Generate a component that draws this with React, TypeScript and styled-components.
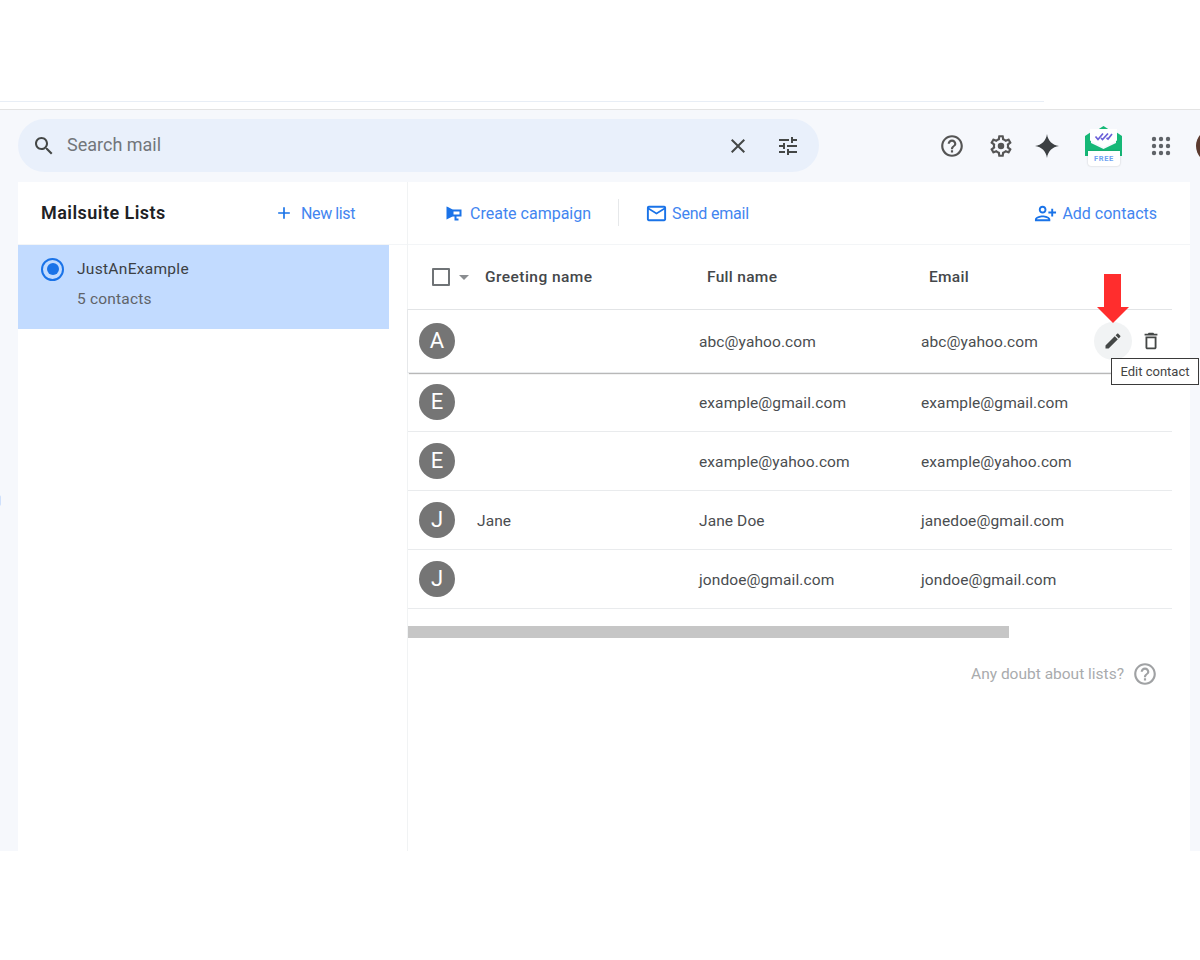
import React from "react";
import styled, { createGlobalStyle } from "styled-components";

const Global = createGlobalStyle`
  html, body { margin: 0; padding: 0; background: #fff; }
  body { font-family: Roboto, "Liberation Sans", sans-serif; color: #444; overflow: hidden; }
  * { box-sizing: border-box; }
`;

const Page = styled.div`
  width: 1200px;
  height: 960px;
  display: flex;
  flex-direction: column;
  background: #fff;
  overflow: hidden;
`;
const TopStrip = styled.div`
  height: 110px;
  padding-top: 101px;
  border-bottom: 1px solid #e3e3e3;
`;
const TopLine = styled.div`
  width: 1044px;
  height: 1px;
  background: #e8eef6;
`;
const App = styled.div`
  position: relative;
  height: 741px;
  background: #f6f8fc;
  display: flex;
  flex-direction: column;
`;
const EdgeMark = styled.div`
  position: absolute;
  left: -3px;
  top: 385px;
  width: 4px;
  height: 11px;
  border-radius: 3px;
  background: #cfe0fb;
`;
const Header = styled.header`
  height: 72px;
  flex: none;
  padding: 9px 0 10px 18px;
  display: flex;
  align-items: center;
  overflow: hidden;
`;
const SearchBar = styled.div`
  width: 801px;
  height: 53px;
  flex: none;
  border-radius: 27px;
  background: #e9f0fb;
  display: flex;
  align-items: center;
  padding: 0 19px 0 14px;
  color: #444746;
`;
const SearchText = styled.span`
  flex: 1;
  margin-left: 11px;
  padding-bottom: 2px;
  font-size: 18px;
  color: #72767a;
`;
const Glyph = styled.svg<{ $size?: number; $left?: number; $color?: string }>`
  width: ${(p) => p.$size ?? 24}px;
  height: ${(p) => p.$size ?? 24}px;
  margin-left: ${(p) => p.$left ?? 0}px;
  flex: none;
  display: block;
  fill: ${(p) => p.$color ?? "#444746"};
`;
const HornGlyph = styled.svg`
  width: 16px;
  height: 15px;
  flex: none;
  display: block;
  fill: none;
  stroke: #1a73e8;
  stroke-width: 2;
`;
const LogoWrap = styled.div`
  position: relative;
  width: 37px;
  height: 40px;
  margin-left: 26px;
  flex: none;
`;
const LogoBadge = styled.div`
  position: absolute;
  left: 3px;
  bottom: 0;
  width: 32px;
  height: 15px;
  background: #fff;
  border-radius: 0 0 3px 3px;
  box-shadow: 0 0 2px rgba(0, 0, 0, 0.22);
  color: #6ea2f2;
  font-size: 7.5px;
  font-weight: 700;
  letter-spacing: 0.6px;
  line-height: 15px;
  text-align: center;
`;
const Profile = styled.div`
  width: 34px;
  height: 34px;
  margin-left: 23px;
  flex: none;
  border-radius: 50%;
  background: #5b3a2e;
`;
const Body = styled.main`
  flex: 1;
  margin: 0 10px 0 18px;
  background: #fff;
  display: flex;
  min-height: 0;
`;
const Side = styled.aside`
  width: 390px;
  flex: none;
  border-right: 1px solid #f1f3f4;
  display: flex;
  flex-direction: column;
`;
const SideHead = styled.div`
  height: 63px;
  flex: none;
  display: flex;
  align-items: center;
  padding: 0 52px 1px 23px;
  border-bottom: 1px solid #f3f5f7;
`;
const SideTitle = styled.h2`
  flex: 1;
  margin: 0;
  font-size: 18px;
  font-weight: 600;
  color: #202124;
  letter-spacing: 0.45px;
`;
const LinkAction = styled.span<{ $gap?: number; $tight?: number }>`
  display: flex;
  align-items: center;
  padding-top: 1px;
  gap: ${(p) => p.$gap ?? 8}px;
  font-size: 16px;
  letter-spacing: ${(p) => p.$tight ?? 0}px;
  color: #4285f0;
  white-space: nowrap;
`;
const ListItem = styled.div`
  width: 371px;
  height: 84px;
  background: #c2dbff;
  padding: 13px 0 0 23px;
  display: grid;
  grid-template-columns: 36px 1fr;
  grid-template-rows: 22px 38px;
  align-items: center;
`;
const Radio = styled.span`
  width: 23px;
  height: 23px;
  border-radius: 50%;
  border: 2.5px solid #1a73e8;
  display: flex;
  align-items: center;
  justify-content: center;
  &::after {
    content: "";
    width: 12px;
    height: 12px;
    border-radius: 50%;
    background: #1a73e8;
  }
`;
const ListName = styled.span`
  font-size: 15.5px;
  color: #3c4043;
  letter-spacing: 0.3px;
`;
const ListCount = styled.span`
  grid-column: 2;
  font-size: 15.5px;
  color: #5f6368;
  letter-spacing: 0.2px;
`;
const Content = styled.section`
  flex: 1;
  min-width: 0;
  display: flex;
  flex-direction: column;
`;
const Toolbar = styled.div`
  height: 63px;
  flex: none;
  display: flex;
  align-items: center;
  padding: 0 33px 1px 38px;
  border-bottom: 1px solid #f3f5f7;
`;
const ToolDivider = styled.span`
  width: 1px;
  height: 27px;
  margin: 0 26px 0 27px;
  background: #e6e8ea;
`;
const Spacer = styled.span`
  flex: 1;
`;
const Table = styled.div`
  width: 764px;
  position: relative;
`;
const HeadRow = styled.div`
  height: 64px;
  display: grid;
  grid-template-columns: 77px 222px 222px 1fr;
  align-items: center;
  font-size: 15.5px;
  font-weight: 500;
  color: #44474a;
  letter-spacing: 0.3px;
`;
const GreetingHead = styled.span`
  letter-spacing: 0.45px;
`;
const SelectCell = styled.div`
  display: flex;
  align-items: center;
  padding-left: 24px;
`;
const CheckBox = styled.span`
  width: 18px;
  height: 18px;
  border: 2px solid #6f7376;
  border-radius: 1px;
  flex: none;
`;
const Caret = styled.span`
  margin-left: 9px;
  width: 0;
  height: 0;
  border-left: 5px solid transparent;
  border-right: 5px solid transparent;
  border-top: 5px solid #8a8d90;
`;
const Row = styled.div<{ $active?: boolean }>`
  position: relative;
  height: ${(p) => (p.$active ? 64 : 59)}px;
  display: grid;
  grid-template-columns: 69px 222px 222px 1fr;
  align-items: center;
  font-size: 15.5px;
  color: #4a4d50;
  letter-spacing: 0.1px;
  border-bottom: 1px solid #e9ebed;
  border-top: ${(p) => (p.$active ? "1px solid #e2e4e6" : "none")};
  box-shadow: ${(p) =>
    p.$active ? "0 2px 1px -1px rgba(0,0,0,.28), -1px 0 0 #e6e8ea" : "none"};
  z-index: ${(p) => (p.$active ? 1 : 0)};
  background: #fff;
`;
const Cell = styled.span`
  padding-top: 1px;
  min-height: 1px;
`;
const AvatarCell = styled.div`
  padding-left: 11px;
`;
const Avatar = styled.div`
  width: 36px;
  height: 36px;
  border-radius: 50%;
  background: #757575;
  color: #fff;
  font-size: 22px;
  line-height: 36px;
  text-align: center;
`;
const RowActions = styled.div`
  position: absolute;
  right: 2px;
  top: 12px;
  display: flex;
  align-items: center;
`;
const HoverIcon = styled.span`
  width: 38px;
  height: 38px;
  border-radius: 50%;
  background: #f1f3f4;
  display: flex;
  align-items: center;
  justify-content: center;
`;
const PlainIcon = styled.span`
  width: 38px;
  height: 38px;
  display: flex;
  align-items: center;
  justify-content: center;
`;
const Tooltip = styled.div`
  position: absolute;
  left: 703px;
  top: 113px;
  width: 88px;
  height: 27px;
  background: #fff;
  border: 1px solid #3a3a3a;
  font-size: 13px;
  line-height: 26px;
  text-align: center;
  color: #444;
  white-space: nowrap;
  z-index: 3;
`;
const Annotation = styled.svg`
  position: absolute;
  left: 689px;
  top: 29px;
  width: 32px;
  height: 49px;
  z-index: 3;
`;
const ScrollThumb = styled.div`
  width: 601px;
  height: 12px;
  margin-top: 17px;
  background: #c6c6c6;
`;
const HelpRow = styled.div`
  margin-top: 23px;
  width: 750px;
  display: flex;
  align-items: center;
  justify-content: flex-end;
  gap: 8px;
  font-size: 15.5px;
  color: #a9abad;
`;

const P = {
  search:
    "M15.5 14h-.79l-.28-.27C15.41 12.59 16 11.11 16 9.5 16 5.91 13.09 3 9.5 3S3 5.91 3 9.5 5.91 16 9.5 16c1.61 0 3.09-.59 4.23-1.57l.27.28v.79l5 4.99L20.49 19l-4.99-5zm-6 0C7.01 14 5 11.99 5 9.5S7.01 5 9.5 5 14 7.01 14 9.5 11.99 14 9.5 14z",
  close:
    "M19 6.41L17.59 5 12 10.59 6.41 5 5 6.41 10.59 12 5 17.59 6.41 19 12 13.41 17.59 19 19 17.59 13.41 12z",
  tune: "M3 17v2h6v-2H3zM3 5v2h10V5H3zm10 16v-2h8v-2h-8v-2h-2v6h2zM7 9v2H3v2h4v2h2V9H7zm14 4v-2H11v2h10zm-6-4h2V7h4V5h-4V3h-2v6z",
  help: "M11 18h2v-2h-2v2zm1-16C6.48 2 2 6.48 2 12s4.48 10 10 10 10-4.48 10-10S17.52 2 12 2zm0 18c-4.41 0-8-3.59-8-8s3.59-8 8-8 8 3.59 8 8-3.59 8-8 8zm0-14c-2.21 0-4 1.79-4 4h2c0-1.1.9-2 2-2s2 .9 2 2c0 2-3 1.75-3 5h2c0-2.25 3-2.5 3-5 0-2.21-1.79-4-4-4z",
  gear: "M19.43 12.98c.04-.32.07-.64.07-.98 0-.34-.03-.66-.07-.98l2.11-1.65c.19-.15.24-.42.12-.64l-2-3.46c-.09-.16-.26-.25-.44-.25-.06 0-.12.01-.17.03l-2.49 1c-.52-.4-1.08-.73-1.69-.98l-.38-2.65C14.46 2.18 14.25 2 14 2h-4c-.25 0-.46.18-.49.42l-.38 2.65c-.61.25-1.17.59-1.69.98l-2.49-1c-.06-.02-.12-.03-.18-.03-.17 0-.34.09-.43.25l-2 3.46c-.13.22-.07.49.12.64l2.11 1.65c-.04.32-.07.65-.07.98 0 .33.03.66.07.98l-2.11 1.65c-.19.15-.24.42-.12.64l2 3.46c.09.16.26.25.44.25.06 0 .12-.01.17-.03l2.49-1c.52.4 1.08.73 1.69.98l.38 2.65c.03.24.24.42.49.42h4c.25 0 .46-.18.49-.42l.38-2.65c.61-.25 1.17-.59 1.69-.98l2.49 1c.06.02.12.03.18.03.17 0 .34-.09.43-.25l2-3.46c.12-.22.07-.49-.12-.64l-2.11-1.65zm-1.98-1.71c.04.31.05.52.05.73 0 .21-.02.43-.05.73l-.14 1.13.89.7 1.08.84-.7 1.21-1.27-.51-1.04-.42-.9.68c-.43.32-.84.56-1.25.73l-1.06.43-.16 1.13-.2 1.35h-1.4l-.19-1.35-.16-1.13-1.06-.43c-.43-.18-.83-.41-1.23-.71l-.91-.7-1.06.43-1.27.51-.7-1.21 1.08-.84.89-.7-.14-1.13c-.03-.31-.05-.54-.05-.74s.02-.43.05-.73l.14-1.13-.89-.7-1.08-.84.7-1.21 1.27.51 1.04.42.9-.68c.43-.32.84-.56 1.25-.73l1.06-.43.16-1.13.2-1.35h1.39l.19 1.35.16 1.13 1.06.43c.43.18.83.41 1.23.71l.91.7 1.06-.43 1.27-.51.7 1.21-1.07.85-.89.7.14 1.13zM12 9a3 3 0 1 0 0 6 3 3 0 0 0 0-6z",
  spark: "M12 0c.9 6.7 5.300 11.100 12 12-6.700.9-11.100 5.300-12 12-.9-6.700-5.300-11.100-12-12 6.700-.9 11.100-5.300 12-12z",
  plus: "M19 13h-6v6h-2v-6H5v-2h6V5h2v6h6v2z",
  edit: "M3 17.25V21h3.750L17.810 9.940l-3.750-3.750L3 17.250zM20.710 7.040c.39-.39.39-1.020 0-1.410l-2.340-2.340c-.39-.39-1.020-.39-1.410 0l-1.830 1.830 3.750 3.750 1.830-1.830z",
  trash: "M6 19c0 1.100.9 2 2 2h8c1.100 0 2-.9 2-2V7H6v12zM8 9h8v10H8V9zm7.500-5l-1-1h-5l-1 1H5v2h14V4z",
  mail: "M20 4H4c-1.100 0-1.990.9-1.990 2L2 18c0 1.100.9 2 2 2h16c1.100 0 2-.9 2-2V6c0-1.100-.9-2-2-2zm0 14H4V8l8 5 8-5v10zm-8-7L4 6h16l-8 5z",
  person:
    "M15 12c2.210 0 4-1.790 4-4s-1.790-4-4-4-4 1.790-4 4 1.790 4 4 4zm0-6c1.100 0 2 .9 2 2s-.9 2-2 2-2-.9-2-2 .9-2 2-2zm-9 4V7H4v3H1v2h3v3h2v-3h3v-2H6zm9 4c-2.670 0-8 1.340-8 4v2h16v-2c0-2.660-5.330-4-8-4zm-6 4c.22-.72 3.310-2 6-2 2.700 0 5.800 1.290 6 2H9z",
};

const Icon = ({
  d,
  size,
  left,
  color,
  mirror,
}: {
  d: string;
  size?: number;
  left?: number;
  color?: string;
  mirror?: boolean;
}) => (
  <Glyph viewBox="0 0 24 24" $size={size} $left={left} $color={color}>
    <path d={d} transform={mirror ? "matrix(-1 0 0 1 24 0)" : undefined} />
  </Glyph>
);

const AppsGlyph = () => (
  <Glyph viewBox="0 0 24 24" $left={27} $color="#5f6368">
    {[5, 12, 19].flatMap((y) =>
      [5, 12, 19].map((x) => <circle key={`${x}-${y}`} cx={x} cy={y} r={2.2} />)
    )}
  </Glyph>
);

const MailsuiteLogo = () => (
  <LogoWrap>
    <svg width="37" height="32" viewBox="0 0 37 32" style={{ display: "block" }}>
      <path d="M18.500 0 L24 3.500 H13 Z" fill="#16b877" />
      <path d="M0 10 L6 6 V17 L18.500 23 L31 17 V6 L37 10 V30 H0 Z" fill="#16b877" />
      <path d="M5 3 H32 V14.500 L18.500 21 L5 14.500 Z" fill="#fff" />
      <path d="M10.500 10.500 L13 13.500 L18 7.500 M16 12 L17.500 13.500 L23 7.500 M21.500 12 L23 13 L27 8" fill="none" stroke="#6a5fd8" strokeWidth="1.700" />
    </svg>
    <LogoBadge>FREE</LogoBadge>
  </LogoWrap>
);

const contacts = [
  { letter: "A", greeting: "", full: "abc@yahoo.com", email: "abc@yahoo.com" },
  { letter: "E", greeting: "", full: "example@gmail.com", email: "example@gmail.com" },
  { letter: "E", greeting: "", full: "example@yahoo.com", email: "example@yahoo.com" },
  { letter: "J", greeting: "Jane", full: "Jane Doe", email: "janedoe@gmail.com" },
  { letter: "J", greeting: "", full: "jondoe@gmail.com", email: "jondoe@gmail.com" },
];

export default function AppRoot() {
  return (
    <Page>
      <Global />
      <TopStrip>
        <TopLine />
      </TopStrip>
      <App>
        <EdgeMark />
        <Header>
          <SearchBar>
            <Icon d={P.search} />
            <SearchText>Search mail</SearchText>
            <Icon d={P.close} />
            <Icon d={P.tune} left={26} />
          </SearchBar>
          <Icon d={P.help} size={26} left={120} color="#555" />
          <Icon d={P.gear} size={26} left={23} color="#555" />
          <Icon d={P.spark} left={21} color="#3c4043" />
          <MailsuiteLogo />
          <AppsGlyph />
          <Profile />
        </Header>
        <Body>
          <Side>
            <SideHead>
              <SideTitle>Mailsuite Lists</SideTitle>
              <LinkAction $gap={7} $tight={-0.4}>
                <Icon d={P.plus} size={20} color="#1a73e8" />
                New list
              </LinkAction>
            </SideHead>
            <ListItem>
              <Radio />
              <ListName>JustAnExample</ListName>
              <ListCount>5 contacts</ListCount>
            </ListItem>
          </Side>
          <Content>
            <Toolbar>
              <LinkAction>
                <HornGlyph viewBox="0 0 16 15">
                  <path d="M1.500 2 L6.500 4.500 V9.500 L1.500 12 Z" fill="#1a73e8" />
                  <path d="M6.500 4.500 H14.500 V9.500 H6.500" />
                  <path d="M9.500 9.500 V13.500 H12.500" />
                </HornGlyph>
                Create campaign
              </LinkAction>
              <ToolDivider />
              <LinkAction $gap={4} $tight={-0.2}>
                <Icon d={P.mail} size={23} color="#1a73e8" />
                Send email
              </LinkAction>
              <Spacer />
              <LinkAction $gap={5}>
                <Icon d={P.person} size={23} color="#1a73e8" mirror />
                Add contacts
              </LinkAction>
            </Toolbar>
            <Table>
              <HeadRow>
                <SelectCell>
                  <CheckBox />
                  <Caret />
                </SelectCell>
                <GreetingHead>Greeting name</GreetingHead>
                <span>Full name</span>
                <span>Email</span>
              </HeadRow>
              {contacts.map((c, i) => (
                <Row key={c.email} $active={i === 0}>
                  <AvatarCell>
                    <Avatar>{c.letter}</Avatar>
                  </AvatarCell>
                  <Cell>{c.greeting}</Cell>
                  <Cell>{c.full}</Cell>
                  <Cell>{c.email}</Cell>
                  {i === 0 && (
                    <RowActions>
                      <HoverIcon>
                        <Icon d={P.edit} size={20} />
                      </HoverIcon>
                      <PlainIcon>
                        <Icon d={P.trash} size={22} />
                      </PlainIcon>
                    </RowActions>
                  )}
                </Row>
              ))}
              <Annotation viewBox="0 0 32 49">
                <path d="M7 0 H24 V33 H32 L16 49 L0 33 H7 Z" fill="#ff2d2d" />
              </Annotation>
              <Tooltip>Edit contact</Tooltip>
            </Table>
            <ScrollThumb />
            <HelpRow>
              Any doubt about lists?
              <Icon d={P.help} size={26} color="#a0a2a4" />
            </HelpRow>
          </Content>
        </Body>
      </App>
    </Page>
  );
}
